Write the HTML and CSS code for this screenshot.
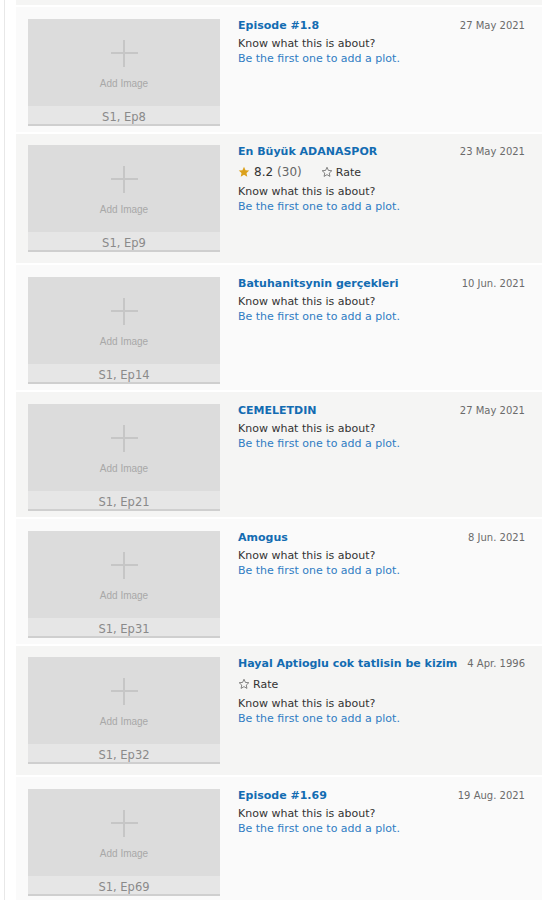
FILE: index.html
```html
<!DOCTYPE html>
<html lang="en">
<head>
  <meta charset="UTF-8">
  <meta name="viewport" content="width=device-width, initial-scale=1.0">
  <title>Episodes - Season 1</title>
  <link rel="stylesheet" href="styles.css">
</head>
<body>
  <div class="episode-list">
    <div class="item item-cut"></div>

    <div class="item odd">
      <div class="thumb">
        <div class="thumb-image">
          <span class="plus"></span>
          <span class="add-label">Add Image</span>
        </div>
        <div class="thumb-caption">S1, Ep8</div>
      </div>
      <div class="info">
        <div class="info-head">
          <a class="title" href="#">Episode #1.8</a>
          <span class="airdate">27 May 2021</span>
        </div>
        <div class="plot">Know what this is about?<br><a href="#">Be the first one to add a plot.</a></div>
      </div>
    </div>

    <div class="item even rated">
      <div class="thumb">
        <div class="thumb-image">
          <span class="plus"></span>
          <span class="add-label">Add Image</span>
        </div>
        <div class="thumb-caption">S1, Ep9</div>
      </div>
      <div class="info">
        <div class="info-head">
          <a class="title" href="#">En Büyük ADANASPOR</a>
          <span class="airdate">23 May 2021</span>
        </div>
        <div class="rating">
          <svg class="star star-full" viewBox="0 0 24 24"><polygon points="12,1.5 15.1,8.3 22.5,9.1 17,14.1 18.5,21.5 12,17.7 5.5,21.5 7,14.1 1.5,9.1 8.9,8.3"/></svg>
          <span class="score">8.2</span>
          <span class="votes">(30)</span>
          <span class="rate"><svg class="star star-empty" viewBox="0 0 24 24"><polygon points="12,2.5 14.8,8.8 21.6,9.5 16.5,14.1 17.9,20.8 12,17.3 6.1,20.8 7.5,14.1 2.4,9.5 9.2,8.8"/></svg>Rate</span>
        </div>
        <div class="plot">Know what this is about?<br><a href="#">Be the first one to add a plot.</a></div>
      </div>
    </div>

    <div class="item odd">
      <div class="thumb">
        <div class="thumb-image">
          <span class="plus"></span>
          <span class="add-label">Add Image</span>
        </div>
        <div class="thumb-caption">S1, Ep14</div>
      </div>
      <div class="info">
        <div class="info-head">
          <a class="title" href="#">Batuhanitsynin gerçekleri</a>
          <span class="airdate">10 Jun. 2021</span>
        </div>
        <div class="plot">Know what this is about?<br><a href="#">Be the first one to add a plot.</a></div>
      </div>
    </div>

    <div class="item even">
      <div class="thumb">
        <div class="thumb-image">
          <span class="plus"></span>
          <span class="add-label">Add Image</span>
        </div>
        <div class="thumb-caption">S1, Ep21</div>
      </div>
      <div class="info">
        <div class="info-head">
          <a class="title" href="#">CEMELETDIN</a>
          <span class="airdate">27 May 2021</span>
        </div>
        <div class="plot">Know what this is about?<br><a href="#">Be the first one to add a plot.</a></div>
      </div>
    </div>

    <div class="item odd">
      <div class="thumb">
        <div class="thumb-image">
          <span class="plus"></span>
          <span class="add-label">Add Image</span>
        </div>
        <div class="thumb-caption">S1, Ep31</div>
      </div>
      <div class="info">
        <div class="info-head">
          <a class="title" href="#">Amogus</a>
          <span class="airdate">8 Jun. 2021</span>
        </div>
        <div class="plot">Know what this is about?<br><a href="#">Be the first one to add a plot.</a></div>
      </div>
    </div>

    <div class="item even rated">
      <div class="thumb">
        <div class="thumb-image">
          <span class="plus"></span>
          <span class="add-label">Add Image</span>
        </div>
        <div class="thumb-caption">S1, Ep32</div>
      </div>
      <div class="info">
        <div class="info-head">
          <a class="title" href="#">Hayal Aptioglu cok tatlisin be kizim</a>
          <span class="airdate">4 Apr. 1996</span>
        </div>
        <div class="rating">
          <span class="rate rate-only"><svg class="star star-empty" viewBox="0 0 24 24"><polygon points="12,2.5 14.8,8.8 21.6,9.5 16.5,14.1 17.9,20.8 12,17.3 6.1,20.8 7.5,14.1 2.4,9.5 9.2,8.8"/></svg>Rate</span>
        </div>
        <div class="plot">Know what this is about?<br><a href="#">Be the first one to add a plot.</a></div>
      </div>
    </div>

    <div class="item odd">
      <div class="thumb">
        <div class="thumb-image">
          <span class="plus"></span>
          <span class="add-label">Add Image</span>
        </div>
        <div class="thumb-caption">S1, Ep69</div>
      </div>
      <div class="info">
        <div class="info-head">
          <a class="title" href="#">Episode #1.69</a>
          <span class="airdate">19 Aug. 2021</span>
        </div>
        <div class="plot">Know what this is about?<br><a href="#">Be the first one to add a plot.</a></div>
      </div>
    </div>
  </div>
</body>
</html>
```

FILE: styles.css
```css
body {
  margin: 0;
  background-color: #ffffff;
  color: #333333;
  font-family: "DejaVu Sans", Verdana, sans-serif;
  font-size: 11px;
}
a {
  text-decoration: none;
}
.episode-list {
  margin-left: 4px;
  border-left: 1px solid #e8e8e8;
  padding: 0 9px 0 11px;
  min-height: 900px;
}
.item {
  display: flex;
  align-items: flex-start;
  padding: 12px 0 6px 12px;
  margin-bottom: 2px;
}
.item.rated {
  padding-top: 11px;
  padding-bottom: 11px;
}
.item-cut {
  height: 5px;
  padding: 0;
  background-color: #f5f5f4;
}
.odd {
  background-color: #fafafa;
}
.even {
  background-color: #f5f5f4;
}
.thumb {
  width: 192px;
  flex-shrink: 0;
  margin-right: 18px;
}
.thumb-image {
  height: 87px;
  background-color: #dcdcdc;
  display: flex;
  flex-direction: column;
  align-items: center;
}
.plus {
  position: relative;
  width: 27px;
  height: 27px;
  margin-top: 21px;
}
.plus::before, .plus::after {
  content: "";
  position: absolute;
  background-color: #c6c6c6;
}
.plus::before {
  left: 12px;
  top: 0;
  width: 2px;
  height: 27px;
}
.plus::after {
  top: 12px;
  left: 0;
  width: 27px;
  height: 2px;
}
.add-label {
  margin-top: 11px;
  font-family: "Liberation Sans", Arial, sans-serif;
  font-size: 10px;
  color: #a8a8a8;
}
.thumb-caption {
  height: 18px;
  line-height: 22px;
  background-color: #e6e6e6;
  border-bottom: 2px solid #cfcfcf;
  text-align: center;
  font-size: 11.5px;
  color: #8a8a8a;
}
.info {
  flex: 1;
  padding-right: 17px;
}
.info-head {
  display: flex;
  justify-content: space-between;
  align-items: flex-start;
  gap: 6px;
  margin-bottom: 4px;
}
.title {
  color: #136cb2;
  font-weight: bold;
  line-height: 13px;
  white-space: nowrap;
}
.airdate {
  color: #6b6b6b;
  font-size: 10px;
  line-height: 13px;
  white-space: nowrap;
}
.rating {
  display: flex;
  align-items: center;
  height: 20px;
  margin: 1px 0 2px;
}
.star {
  width: 12px;
  height: 12px;
}
.star-full {
  fill: #dba11c;
  margin-right: 4px;
}
.star-empty {
  fill: none;
  stroke: #666666;
  stroke-width: 1.6;
  margin-right: 3px;
}
.score {
  font-size: 12px;
  color: #333333;
}
.votes {
  margin-left: 4px;
  font-size: 12px;
  color: #666666;
}
.rate {
  display: flex;
  align-items: center;
  margin-left: 19px;
  color: #333333;
}
.rate-only {
  margin-left: 0;
}
.plot {
  line-height: 15px;
}
.plot a {
  color: #2f7cc3;
}
```
